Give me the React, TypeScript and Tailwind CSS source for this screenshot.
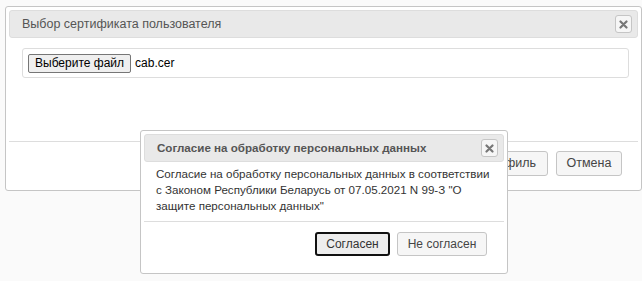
const CloseIcon = () => (
  <span className="flex h-[18px] w-[17px] items-center justify-center rounded-[3px] border border-[#c5c5c5] bg-[#f6f6f6]">
    <svg width="9" height="9" viewBox="0 0 9 9">
      <path d="M1.5 1.5 L7.5 7.5 M7.5 1.5 L1.5 7.5" stroke="#777" strokeWidth="2.2" strokeLinecap="round" />
    </svg>
  </span>
)

const App = () => {
  return (
    <div className="relative h-[281px] w-[642px] overflow-hidden bg-[#fafafa] font-['Liberation_Sans',Arial,sans-serif] text-[11.6px] text-[#333]">
      {/* Main dialog */}
      <div className="ml-[5px] mt-[6px] flex h-[185px] w-[637px] flex-col rounded-[3px] border border-[#c5c5c5] bg-white p-[3px]">
        <div className="flex h-[28px] items-center justify-between rounded-[3px] border border-[#dddddd] bg-[#e9e9e9] pl-[12px] pr-[5px]">
          <span className="text-[12.5px] text-[#555]">Выбор сертификата пользователя</span>
          <CloseIcon />
        </div>

        <div className="flex-1 pl-[13px] pr-[9px] pt-[10px]">
          <div className="flex h-[30px] items-center gap-[4px] rounded-[3px] border border-[#dddddd] px-[5px]">
            <button className="h-[19px] rounded-[2px] border border-[#767676] bg-[#efefef] px-[6px] text-[12px] leading-none text-black">
              Выберите файл
            </button>
            <span className="text-[12px] text-black">cab.cer</span>
          </div>
        </div>

        {/* footer, first button mostly hidden under the consent dialog */}
        <div className="flex h-[46px] items-start justify-end gap-[8px] border-t border-[#dddddd] pr-[16px] pt-[9px]">
          <button className="h-[25px] rounded-[3px] border border-[#c5c5c5] bg-[#f6f6f6] pl-[40px] pr-[11px] text-[12.5px] text-[#454545]">
            профиль
          </button>
          <button className="h-[25px] w-[66px] rounded-[3px] border border-[#c5c5c5] bg-[#f6f6f6] text-[12.5px] text-[#454545]">
            Отмена
          </button>
        </div>
      </div>

      {/* Consent dialog */}
      <div className="absolute left-[140px] top-[130px] flex h-[144px] w-[368px] flex-col rounded-[3px] border border-[#c5c5c5] bg-white p-[3px]">
        <div className="flex h-[28px] items-center justify-between rounded-[3px] border border-[#dddddd] bg-[#e9e9e9] pl-[12px] pr-[5px]">
          <span className="font-bold text-[#555]">Согласие на обработку персональных данных</span>
          <CloseIcon />
        </div>

        <div className="flex-1 whitespace-nowrap px-[12px] pt-[4px] leading-[16px] text-[#333]">
          Согласие на обработку персональных данных в соответствии
          <br />с Законом Республики Беларусь от 07.05.2021 N 99-З "О
          <br />защите персональных данных"
        </div>

        <div className="flex h-[49px] items-start justify-end gap-[7px] border-t border-[#dddddd] pr-[17px] pt-[10px]">
          <button className="h-[24px] w-[75px] rounded-[3px] border-2 border-[#111] bg-[#ededed] text-[12px] text-[#333]">
            Согласен
          </button>
          <button className="h-[24px] w-[90px] rounded-[3px] border border-[#c5c5c5] bg-[#f6f6f6] text-[12px] text-[#454545]">
            Не согласен
          </button>
        </div>
      </div>
    </div>
  )
}

export default App
